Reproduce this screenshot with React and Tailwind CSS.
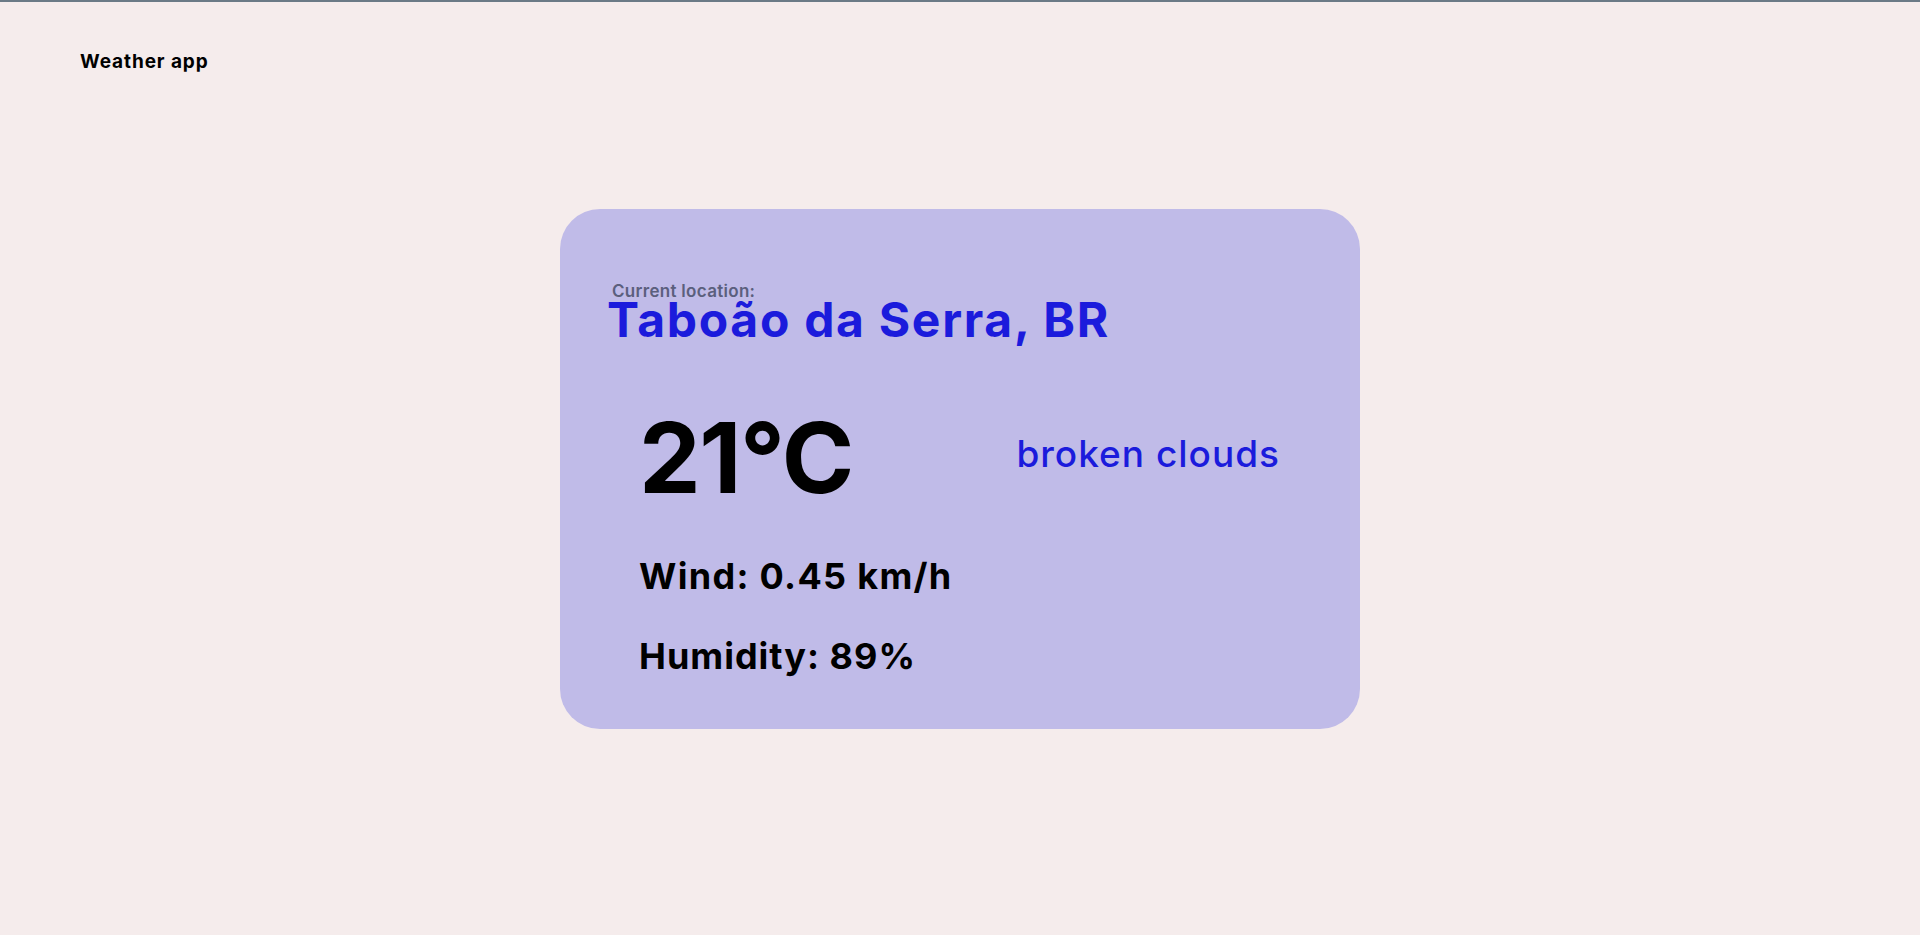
// Weather card: current location, temperature, description, wind and humidity.
const weather = {
  city: 'Taboão da Serra, BR',
  temp: 21,
  description: 'broken clouds',
  wind: 0.45,
  humidity: 89,
}

export default function App() {
  return (
    <div className="h-[935px] overflow-hidden border-t-2 border-[#6b7a86] bg-[#f5ecec] font-['Inter',sans-serif] text-black">
      <header className="pl-[80px] pt-[48px]">
        <h1 className="text-[19px] font-bold leading-[24px] tracking-[0.9px]">Weather app</h1>
      </header>

      <main className="mx-auto mt-[135px] h-[520px] w-[800px] rounded-[40px] bg-[#c0bbe8] pl-[47px] pt-[74px]">
        <p className="ml-[5px] text-[17px] font-semibold leading-none tracking-[0.3px] text-[#5b5f7d]">
          Current location:
        </p>
        <h2 className="mt-[-4px] text-[48px] font-bold leading-none tracking-[1.7px] text-[#1b1bdc]">
          {weather.city}
        </h2>

        <div className="mt-[65px] flex items-start justify-between pl-[32px] pr-[80px]">
          <div className="text-[98px] font-bold leading-none tracking-[-1.5px]">{weather.temp}°C</div>
          <div className="mt-[26px] text-[37px] font-medium leading-none tracking-[1px] text-[#1b1bdc]">
            {weather.description}
          </div>
        </div>

        <div className="mt-[51px] pl-[32px] text-[36px] font-bold leading-none">
          <p className="tracking-[1.3px]">Wind: {weather.wind} km/h</p>
          <p className="mt-[44px] tracking-[1px]">Humidity: {weather.humidity}%</p>
        </div>
      </main>
    </div>
  )
}
